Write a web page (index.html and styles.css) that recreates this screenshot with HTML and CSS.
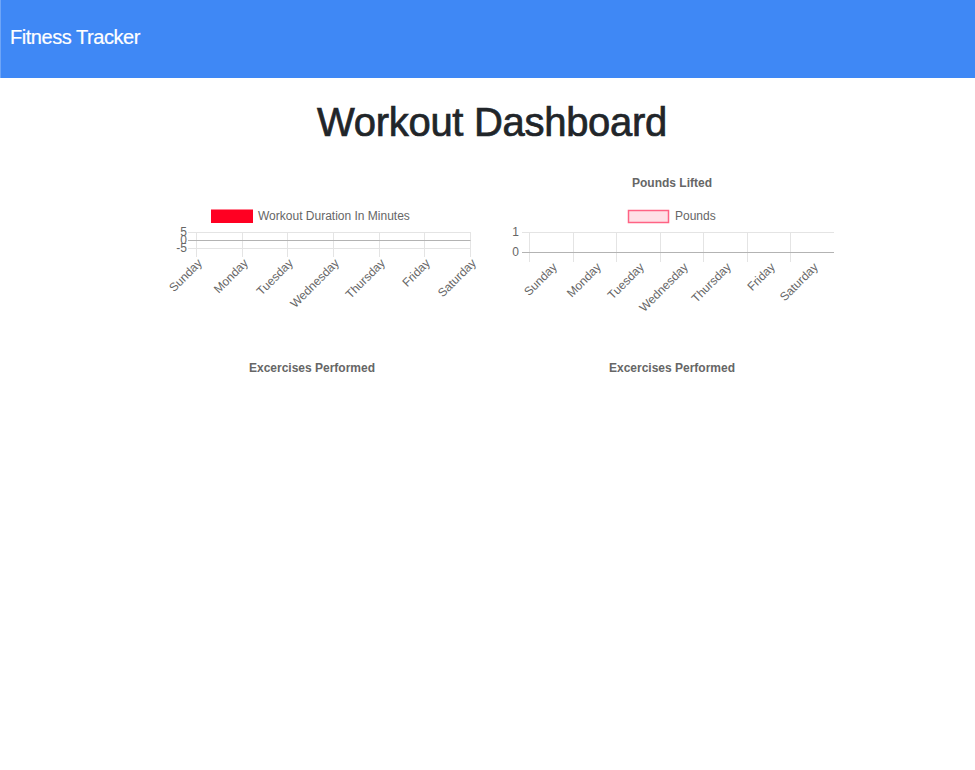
FILE: index.html
```html
<!DOCTYPE html>
<html lang="en">
<head>
<meta charset="utf-8">
<title>Fitness Tracker</title>
<link rel="stylesheet" href="styles.css">
</head>
<body>
<nav class="navbar">
  <span class="brand">Fitness Tracker</span>
</nav>
<main class="page">
  <h1 class="page-title">Workout Dashboard</h1>
  <div class="chart-grid">
    <div class="chart-cell">
      <svg class="chart" width="330" height="150" viewBox="0 0 330 150">
        <rect x="64" y="39.5" width="42" height="13.5" fill="#ff0022"/>
        <text class="legend-text" x="111" y="50">Workout Duration In Minutes</text>
        <g class="grid">
          <line x1="41" y1="62.5" x2="323.5" y2="62.5"/>
          <line x1="41" y1="78.5" x2="323.5" y2="78.5"/>
          <line x1="49.5" y1="62" x2="49.5" y2="87"/>
          <line x1="95.5" y1="62" x2="95.5" y2="87"/>
          <line x1="140.5" y1="62" x2="140.5" y2="87"/>
          <line x1="186.5" y1="62" x2="186.5" y2="87"/>
          <line x1="232.5" y1="62" x2="232.5" y2="87"/>
          <line x1="277.5" y1="62" x2="277.5" y2="87"/>
          <line x1="323.5" y1="62" x2="323.5" y2="87"/>
        </g>
        <line class="zero" x1="41" y1="70.5" x2="323.5" y2="70.5"/>
        <g class="ytick">
          <text x="40" y="66">5</text>
          <text x="40" y="74">0</text>
          <text x="40" y="82">-5</text>
        </g>
        <g class="xtick">
          <text transform="translate(53 91) rotate(-45)">Sunday</text>
          <text transform="translate(99 91) rotate(-45)">Monday</text>
          <text transform="translate(144 91) rotate(-45)">Tuesday</text>
          <text transform="translate(190 91) rotate(-45)">Wednesday</text>
          <text transform="translate(236 91) rotate(-45)">Thursday</text>
          <text transform="translate(281 91) rotate(-45)">Friday</text>
          <text transform="translate(327 91) rotate(-45)">Saturday</text>
        </g>
      </svg>
    </div>
    <div class="chart-cell">
      <svg class="chart" width="330" height="150" viewBox="0 0 330 150">
        <text class="chart-title" x="165" y="17">Pounds Lifted</text>
        <rect x="121.5" y="40.5" width="40" height="12" fill="rgba(255,99,132,0.2)" stroke="rgb(255,99,132)" stroke-width="1.5"/>
        <text class="legend-text" x="168" y="50">Pounds</text>
        <g class="grid">
          <line x1="15" y1="62.5" x2="327" y2="62.5"/>
          <line x1="22.5" y1="62" x2="22.5" y2="92"/>
          <line x1="66.5" y1="62" x2="66.5" y2="92"/>
          <line x1="109.5" y1="62" x2="109.5" y2="92"/>
          <line x1="153.5" y1="62" x2="153.5" y2="92"/>
          <line x1="196.5" y1="62" x2="196.5" y2="92"/>
          <line x1="240.5" y1="62" x2="240.5" y2="92"/>
          <line x1="283.5" y1="62" x2="283.5" y2="92"/>
        </g>
        <line class="zero" x1="15" y1="82.5" x2="327" y2="82.5"/>
        <g class="ytick">
          <text x="12" y="66">1</text>
          <text x="12" y="86">0</text>
        </g>
        <g class="xtick">
          <text transform="translate(48 95) rotate(-45)">Sunday</text>
          <text transform="translate(92 95) rotate(-45)">Monday</text>
          <text transform="translate(135 95) rotate(-45)">Tuesday</text>
          <text transform="translate(179 95) rotate(-45)">Wednesday</text>
          <text transform="translate(222 95) rotate(-45)">Thursday</text>
          <text transform="translate(266 95) rotate(-45)">Friday</text>
          <text transform="translate(309 95) rotate(-45)">Saturday</text>
        </g>
      </svg>
    </div>
    <div class="chart-cell">
      <div class="cell-title">Excercises Performed</div>
    </div>
    <div class="chart-cell">
      <div class="cell-title">Excercises Performed</div>
    </div>
  </div>
</main>
</body>
</html>
```

FILE: styles.css
```css
html, body {
  margin: 0;
  padding: 0;
  background: #ffffff;
  font-family: "Liberation Sans", Arial, sans-serif;
}

.navbar {
  height: 78px;
  background: #3f88f5;
  border-left: 1px solid #6ea5f7;
  display: flex;
  align-items: center;
  padding-left: 9px;
  box-sizing: border-box;
}

.brand {
  color: #ffffff;
  font-size: 20px;
  letter-spacing: -0.45px;
  line-height: 24px;
  margin-bottom: 4px;
  -webkit-text-stroke: 0.2px #ffffff;
}

.page {
  padding-left: 9px;
}

.page-title {
  margin: 20px 0 0 0;
  font-size: 40px;
  line-height: 48px;
  font-weight: 400;
  color: #212529;
  text-align: center;
  letter-spacing: -0.3px;
  -webkit-text-stroke: 0.7px #212529;
}

.chart-grid {
  display: grid;
  grid-template-columns: 330px 330px;
  column-gap: 30px;
  row-gap: 40px;
  justify-content: center;
  margin-top: 24px;
}

.chart {
  display: block;
  overflow: visible;
  font-family: "Liberation Sans", Arial, sans-serif;
  font-size: 12px;
}

.chart text {
  fill: #666666;
}

.chart .grid line {
  stroke: #e4e4e4;
  stroke-width: 1;
}

.chart .zero {
  stroke: #b3b3b3;
  stroke-width: 1;
}

.chart .ytick text {
  text-anchor: end;
}

.chart .xtick text {
  text-anchor: end;
  dominant-baseline: central;
}

.chart .chart-title {
  text-anchor: middle;
  font-weight: 700;
}

.cell-title {
  text-align: center;
  font-size: 12px;
  line-height: 14px;
  font-weight: 700;
  color: #666666;
  padding-top: 1px;
}
```
